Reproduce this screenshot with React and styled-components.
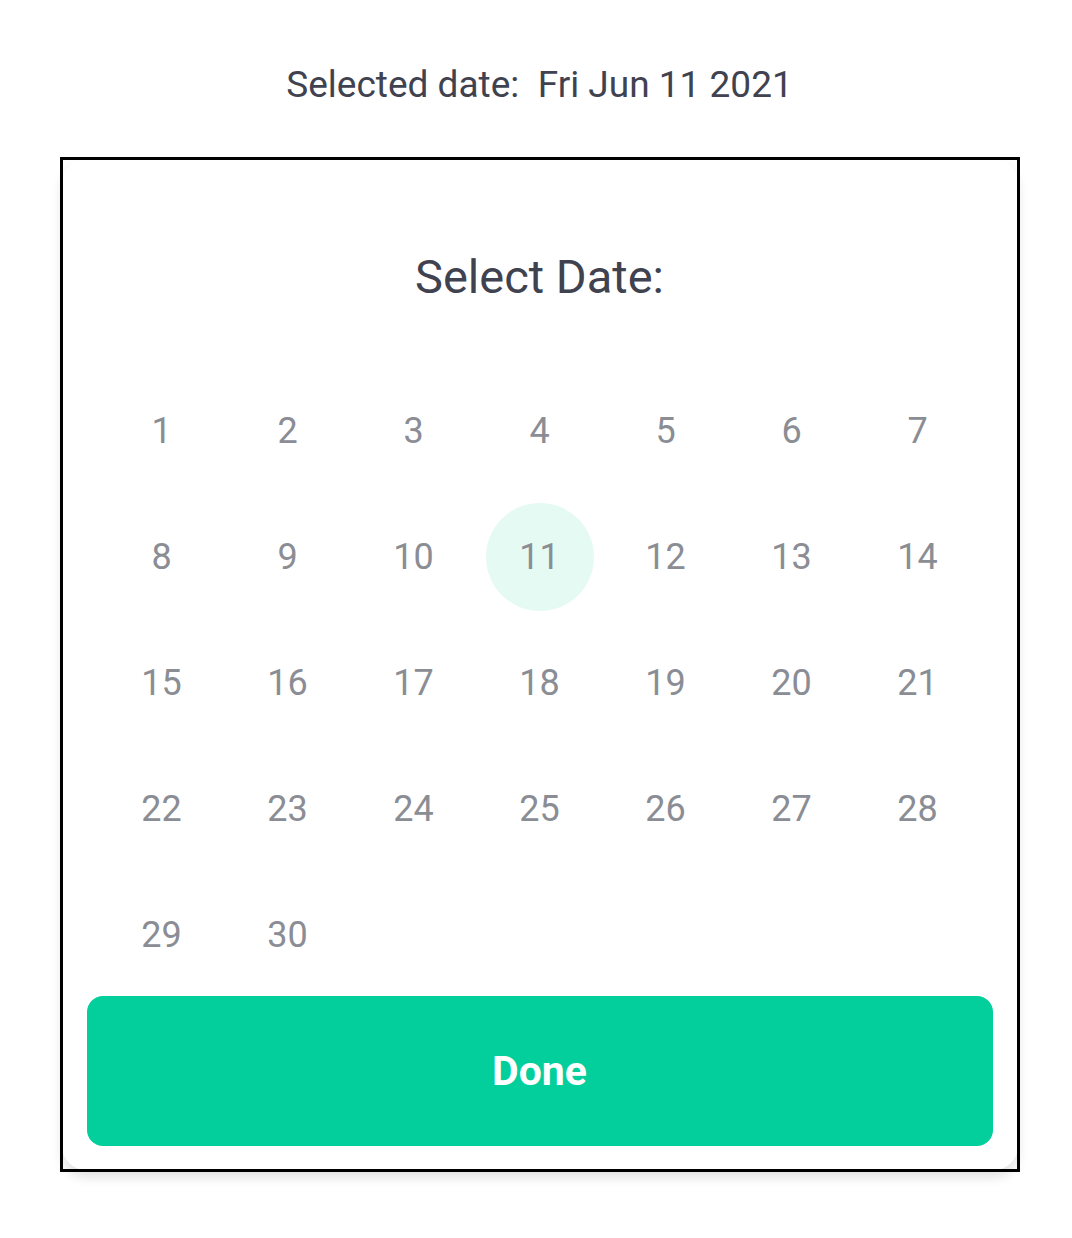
import styled, { createGlobalStyle } from 'styled-components';

const GlobalStyle = createGlobalStyle`
  html, body {
    margin: 0;
    padding: 0;
    background: #ffffff;
    font-family: Roboto, "Noto Sans", Arial, sans-serif;
  }
`;

const Page = styled.div`
  width: 1072px;
  min-height: 1238px;
  display: flex;
  flex-direction: column;
  align-items: center;
  box-sizing: border-box;
  padding: 63px 0 0 7px;
`;

const SelectedLine = styled.div`
  font-size: 37px;
  color: #404250;
  line-height: 44px;
  white-space: pre;
`;

const Card = styled.div`
  position: relative;
  margin-top: 52px;
  width: 956px;
  height: 1011px;
  box-sizing: border-box;
  background: #ffffff;
  border-radius: 24px;
  box-shadow: 0 7px 12px rgba(0, 0, 0, 0.12);
  padding: 0 25px 24px;
  display: flex;
  flex-direction: column;
  align-items: center;

  &::after {
    content: '';
    position: absolute;
    inset: -2px;
    border: 3px solid #000000;
    pointer-events: none;
  }
`;

const Title = styled.h2`
  margin: 89px 0 0;
  font-size: 47px;
  font-weight: 400;
  color: #404250;
  line-height: 58px;
`;

const Grid = styled.div`
  margin-top: 62px;
  display: grid;
  grid-template-columns: repeat(7, 126px);
  grid-auto-rows: 126px;
  justify-items: center;
  align-items: center;
`;

const Day = styled.div`
  width: 108px;
  height: 108px;
  border-radius: 50%;
  display: flex;
  align-items: center;
  justify-content: center;
  font-size: 36px;
  color: #8b8d95;
  background: ${(p) => (p.$selected ? '#e6faf4' : 'transparent')};
`;

const DoneButton = styled.button`
  margin-top: -2px;
  flex-shrink: 0;
  width: 100%;
  height: 150px;
  border: none;
  border-radius: 16px;
  background: #02cf9c;
  color: #ffffff;
  font-family: Roboto, "Noto Sans", Arial, sans-serif;
  font-size: 41px;
  font-weight: 700;
  cursor: pointer;
`;

const days = Array.from({ length: 30 }, (_, i) => i + 1);

export default function App() {
  const selected = 11;
  return (
    <Page>
      <GlobalStyle />
      <SelectedLine>{'Selected date:  Fri Jun 11 2021'}</SelectedLine>
      <Card>
        <Title>Select Date:</Title>
        <Grid>
          {days.map((d) => (
            <Day key={d} $selected={d === selected}>
              {d}
            </Day>
          ))}
        </Grid>
        <DoneButton>Done</DoneButton>
      </Card>
    </Page>
  );
}
